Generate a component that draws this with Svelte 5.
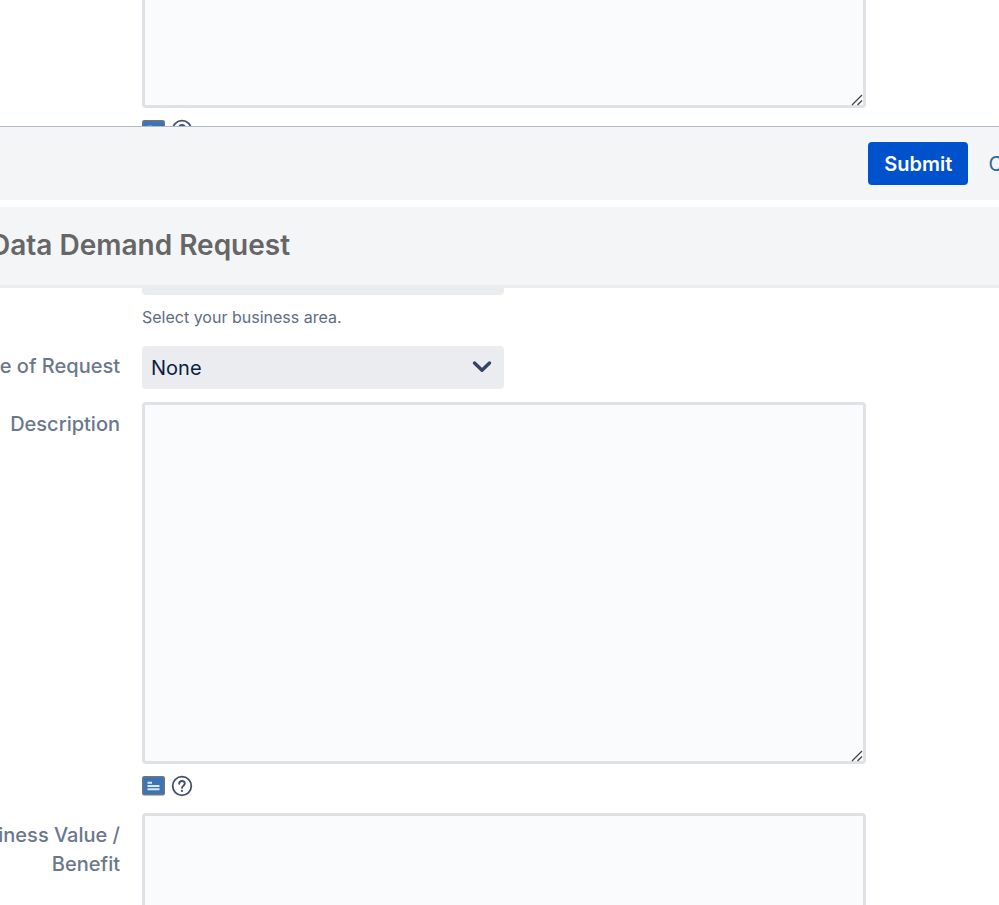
<script lang="ts">
	let details = $state('');
	let description = $state('');
	let benefit = $state('');
	let requestType = $state('');
</script>

{#snippet grip()}
	<svg class="grip" width="12" height="12" viewBox="0 0 12 12" aria-hidden="true">
		<path d="M1 11 11 1M6.5 11 11 6.5" stroke="#444" stroke-width="1.3" fill="none" />
	</svg>
{/snippet}

{#snippet tools()}
	<div class="tools">
		<button type="button" aria-label="Preview">
			<svg width="24" height="20" viewBox="0 0 24 20">
				<rect x="0.75" y="0.75" width="21.5" height="18" rx="1.5" fill="#3b73b5" stroke="#70757c" stroke-width="1.5" />
				<path d="M5.5 6.8h4.5M5.5 10h12M5.5 13.2h12" stroke="#dce9f6" stroke-width="1.9" />
			</svg>
		</button>
		<button type="button" aria-label="Help">
			<svg width="22" height="22" viewBox="0 0 22 22" fill="none" stroke="#42526e">
				<circle cx="11" cy="11" r="9.3" stroke-width="1.8" />
				<path d="M8.2 8.7c0-1.7 1.2-2.7 2.8-2.7s2.8 1 2.8 2.6c0 2-2.8 2.1-2.8 4.3" stroke-width="1.9" stroke-linecap="round" />
				<circle cx="11" cy="15.9" r="1.1" fill="#42526e" stroke="none" />
			</svg>
		</button>
	</div>
{/snippet}

<!-- Dialog that ends above the second one -->
<section class="panel panel-top">
	<div class="row">
		<span class="label"></span>
		<div class="field">
			<div class="area area-cut">
				<textarea aria-label="Details" bind:value={details}></textarea>
				{@render grip()}
			</div>
			{@render tools()}
		</div>
	</div>
</section>

<footer class="actions">
	<button class="submit" type="submit">Submit</button>
	<a class="cancel" href="/cancel">Cancel</a>
</footer>

<header class="title-bar">
	<h2>Data Demand Request</h2>
</header>

<section class="panel">
	<div class="row">
		<span class="label"></span>
		<div class="field">
			<div class="select-end"></div>
			<p class="hint">Select your business area.</p>
		</div>
	</div>

	<div class="row">
		<label class="label label-select" for="request-type"><span>Type of Request</span></label>
		<div class="field">
			<div class="select-wrapper">
				<select id="request-type" bind:value={requestType}>
					<option value="">None</option>
				</select>
				<svg class="chevron" width="20" height="14" viewBox="0 0 20 14" aria-hidden="true">
					<path d="M2.5 3 10 10.3 17.5 3" fill="none" stroke="#344563" stroke-width="3.4" stroke-linecap="round" stroke-linejoin="round" />
				</svg>
			</div>
		</div>
	</div>

	<div class="row">
		<label class="label" for="description"><span>Description</span></label>
		<div class="field">
			<div class="area">
				<textarea id="description" bind:value={description}></textarea>
				{@render grip()}
			</div>
			{@render tools()}
		</div>
	</div>

	<div class="row">
		<label class="label" for="benefit"><span>Business Value /<br />Benefit</span></label>
		<div class="field">
			<div class="area">
				<textarea id="benefit" bind:value={benefit}></textarea>
				{@render grip()}
			</div>
		</div>
	</div>
</section>

<style>
	:global(html),
	:global(body),
	:global(#app) {
		height: 100%;
	}
	:global(body) {
		margin: 0;
		background: #fff;
		overflow: hidden;
	}
	:global(#app) {
		display: flex;
		flex-direction: column;
		font-family: Inter, "Liberation Sans", sans-serif;
		font-size: 20px;
		color: #172b4d;
	}
	.panel {
		flex: 1;
		min-height: 0;
		overflow: hidden;
	}
	.panel-top {
		flex: none;
		height: 126px;
	}
	.row {
		display: flex;
		gap: 22px;
		padding-right: 133px;
		margin-bottom: 13px;
	}
	.label {
		display: flex;
		justify-content: flex-end;
		flex: none;
		width: 120px;
		padding-top: 8px;
		box-sizing: border-box;
		color: #6b778c;
		font-weight: 500;
		line-height: 29px;
		text-align: right;
		white-space: nowrap;
	}
	.label-select {
		padding-top: 6px;
	}
	.field {
		flex: 1;
		min-width: 0;
	}
	.area {
		position: relative;
		height: 362px;
	}
	.area-cut {
		height: 108px;
	}
	textarea {
		display: block;
		box-sizing: border-box;
		width: 100%;
		height: 100%;
		padding: 8px;
		border: 3px solid #dfe1e6;
		border-radius: 4px;
		background: #fafbfc;
		color: #091e42;
		font: inherit;
		resize: none;
		outline: none;
	}
	.area-cut textarea {
		border-top: 0;
		border-top-left-radius: 0;
		border-top-right-radius: 0;
	}
	.grip {
		position: absolute;
		right: 3px;
		bottom: 2px;
		pointer-events: none;
	}
	.tools {
		display: flex;
		align-items: center;
		gap: 5px;
		height: 22px;
		padding: 11px 0 3px;
	}
	.tools button {
		display: flex;
		padding: 0;
		border: 0;
		background: none;
		cursor: pointer;
	}
	.actions {
		display: flex;
		align-items: center;
		justify-content: flex-end;
		gap: 20px;
		height: 73px;
		flex: none;
		border-top: 1px solid #b3bac5;
		background: #f4f5f7;
		overflow: hidden;
	}
	.submit {
		height: 43px;
		padding: 0 16px;
		border: 0;
		border-radius: 4px;
		background: #0052cc;
		color: #fff;
		font: inherit;
		font-weight: 600;
		cursor: pointer;
	}
	.cancel {
		margin-right: -55px;
		color: #2a67a5;
		text-decoration: none;
	}
	.title-bar {
		flex: none;
		margin-top: 7px;
		padding: 18px 0 20px;
		border-bottom: 3px solid #ebecf0;
		background: #f4f5f7;
		overflow: hidden;
	}
	h2 {
		margin: 0 0 0 -10px;
		color: #666;
		font-size: 28px;
		font-weight: 600;
		line-height: 40px;
	}
	/* Bottom edge of the business area select, scrolled under the title bar */
	.select-end {
		width: 50%;
		height: 7px;
		border-radius: 0 0 4px 4px;
		background: #ebecf0;
	}
	.hint {
		margin: 12px 0 6px;
		color: #5e6c84;
		font-size: 16px;
		line-height: 20px;
	}
	.select-wrapper {
		position: relative;
		width: 50%;
	}
	select {
		display: block;
		width: 100%;
		height: 43px;
		padding: 0 36px 0 9px;
		border: 0;
		border-radius: 4px;
		background: #ebecf0;
		color: #091e42;
		font: inherit;
		appearance: none;
		outline: none;
	}
	.chevron {
		position: absolute;
		right: 12px;
		top: 14px;
		pointer-events: none;
	}
</style>
